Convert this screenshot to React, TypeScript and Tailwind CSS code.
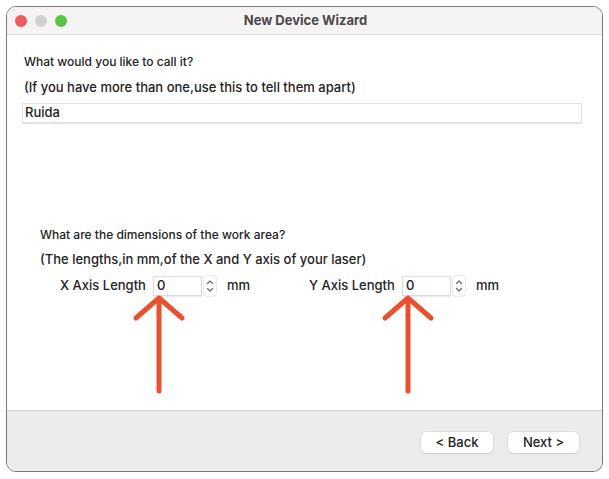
import React from "react";

const font = { fontFamily: 'Inter, "Liberation Sans", Arial, Helvetica, sans-serif' };

function Stepper() {
  return (
    <div className="flex h-[20px] w-[12px] flex-col items-center justify-center rounded-[3px] bg-white shadow-[0_0_0_0.5px_#d4d4d4]">
      <svg width="8" height="16" viewBox="0 0 8 16" fill="none" stroke="#6b6b6b" strokeWidth="1.2" strokeLinecap="round" strokeLinejoin="round">
        <path d="M1.5 5.5 L4 3 L6.5 5.5" />
        <path d="M1.5 10.5 L4 13 L6.5 10.5" />
      </svg>
    </div>
  );
}

function SpinField({ label }: { label: string }) {
  return (
    <div className="flex items-center">
      <span className="w-[93px] whitespace-nowrap text-[13px] font-medium text-[#222]">{label}</span>
      <div className="flex h-[20px] w-[49px] items-center border border-[#dcdcdc] bg-white pl-[3px] text-[13px] font-medium text-[#222] shadow-[0_1px_1px_rgba(0,0,0,0.08)]">
        0
      </div>
      <div className="ml-[2px]">
        <Stepper />
      </div>
      <span className="ml-[11px] text-[13px] font-medium text-[#222]">mm</span>
    </div>
  );
}

export default function App() {
  return (
    <div className="relative h-[479px] w-[609px] overflow-hidden bg-white pl-[6px] pt-[6px]" style={font}>
      <div className="flex h-[466px] w-[597px] flex-col overflow-hidden rounded-[10px] border border-[#7d7878] bg-white">
        {/* Title bar */}
        <div className="relative flex h-[28px] shrink-0 items-center border-b border-[#dedbdd] bg-[#f6f3f5] pl-[8px]">
          <div className="flex gap-[8px]">
            <span className="h-[12px] w-[12px] rounded-full bg-[#ec5b5b]" />
            <span className="h-[12px] w-[12px] rounded-full bg-[#d3d0d2]" />
            <span className="h-[12px] w-[12px] rounded-full bg-[#5bc245]" />
          </div>
          <div className="absolute inset-0 flex items-center justify-center pl-[2px] text-[13px] font-bold text-[#4b4849]">
            New Device Wizard
          </div>
        </div>

        {/* Content */}
        <div className="flex h-[375px] shrink-0 flex-col pl-[17px] pt-[19px]">
          <div className="text-[12px] font-medium leading-[16px] text-[#222]">What would you like to call it?</div>
          <div className="mt-[9px] text-[13px] font-medium leading-[17px] text-[#222]">
            (If you have more than one,use this to tell them apart)
          </div>
          <div className="-ml-[2px] mt-[7px] flex h-[20px] w-[560px] items-center border border-[#e0e0e0] bg-white pl-[2px] text-[13px] font-medium text-[#222] shadow-[0_1px_1px_rgba(0,0,0,0.1)]">
            Ruida
          </div>

          <div className="ml-[16px] mt-[104px] text-[12px] font-medium leading-[16px] text-[#222]">
            What are the dimensions of the work area?
          </div>
          <div className="ml-[16px] mt-[8px] text-[13px] font-medium leading-[17px] text-[#222]">
            (The lengths,in mm,of the X and Y axis of your laser)
          </div>
          <div className="ml-[36px] mt-[8px] flex items-center">
            <div className="w-[249px]">
              <SpinField label="X Axis Length" />
            </div>
            <SpinField label="Y Axis Length" />
          </div>
        </div>

        {/* Footer */}
        <div className="flex flex-1 items-start justify-end gap-[15px] border-t border-[#cfcfcf] bg-[#ececec] pr-[23px] pt-[21px]">
          <button className="flex h-[21px] w-[72px] items-center justify-center rounded-[5px] bg-white text-[13px] font-medium text-[#222] shadow-[0_0_0_0.5px_#cfcfcf,0_1px_1px_rgba(0,0,0,0.15)]">
            &lt; Back
          </button>
          <button className="flex h-[21px] w-[71px] items-center justify-center rounded-[5px] bg-white text-[13px] font-medium text-[#222] shadow-[0_0_0_0.5px_#cfcfcf,0_1px_1px_rgba(0,0,0,0.15)]">
            Next &gt;
          </button>
        </div>
      </div>

      {/* Annotation arrows */}
      <svg
        className="pointer-events-none absolute left-0 top-0"
        width="609"
        height="479"
        viewBox="0 0 609 479"
        fill="none"
        stroke="#e8512f"
        strokeWidth="5"
        strokeLinecap="round"
        strokeLinejoin="round"
      >
        <path d="M159 300 L159 391" />
        <path d="M136 318 L159 298 L182 318" />
        <path d="M408 300 L408 391" />
        <path d="M385 318 L408 298 L431 318" />
      </svg>
    </div>
  );
}
